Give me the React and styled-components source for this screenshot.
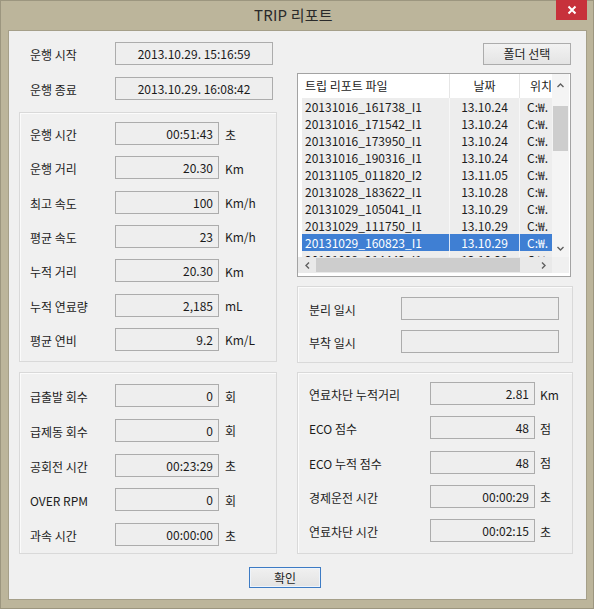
import styled, { createGlobalStyle } from "styled-components";

const GlobalStyle = createGlobalStyle`
  html, body {
    margin: 0;
    padding: 0;
  }
  body {
    width: 594px;
    height: 609px;
    overflow: hidden;
    font-family: "Noto Sans CJK KR", "Noto Sans", sans-serif;
    font-size: 12px;
    color: #1e1e1e;
    background: #bcb59b;
  }
`;

const startEnd = [
  { label: "운행 시작", value: "2013.10.29. 15:16:59" },
  { label: "운행 종료", value: "2013.10.29. 16:08:42" },
];

const driveStats = [
  { label: "운행 시간", value: "00:51:43", unit: "초" },
  { label: "운행 거리", value: "20.30", unit: "Km" },
  { label: "최고 속도", value: "100", unit: "Km/h" },
  { label: "평균 속도", value: "23", unit: "Km/h" },
  { label: "누적 거리", value: "20.30", unit: "Km" },
  { label: "누적 연료량", value: "2,185", unit: "mL" },
  { label: "평균 연비", value: "9.2", unit: "Km/L" },
];

const habitStats = [
  { label: "급출발 회수", value: "0", unit: "회" },
  { label: "급제동 회수", value: "0", unit: "회" },
  { label: "공회전 시간", value: "00:23:29", unit: "초" },
  { label: "OVER RPM", value: "0", unit: "회" },
  { label: "과속 시간", value: "00:00:00", unit: "초" },
];

const ecoStats = [
  { label: "연료차단 누적거리", value: "2.81", unit: "Km" },
  { label: "ECO 점수", value: "48", unit: "점" },
  { label: "ECO 누적 점수", value: "48", unit: "점" },
  { label: "경제운전 시간", value: "00:00:29", unit: "초" },
  { label: "연료차단 시간", value: "00:02:15", unit: "초" },
];

const files = [
  ["20131016_161738_I1", "13.10.24"],
  ["20131016_171542_I1", "13.10.24"],
  ["20131016_173950_I1", "13.10.24"],
  ["20131016_190316_I1", "13.10.24"],
  ["20131105_011820_I2", "13.11.05"],
  ["20131028_183622_I1", "13.10.28"],
  ["20131029_105041_I1", "13.10.29"],
  ["20131029_111750_I1", "13.10.29"],
  ["20131029_160823_I1", "13.10.29"],
  ["20131029_214443_I1", "13.10.29"],
];
const SELECTED = 8;

const Window = styled.div`
  width: 594px;
  height: 609px;
  box-sizing: border-box;
  display: flex;
  flex-direction: column;
  background: #bcb59b;
  box-shadow: inset 0 0 0 1px #9c967f;
`;

const TitleBar = styled.div`
  height: 30px;
  flex-shrink: 0;
  display: grid;
  grid-template-columns: 1fr auto 1fr;
  align-items: center;
  padding-right: 7px;
`;

const Title = styled.div`
  grid-column: 2;
  font-size: 15px;
  line-height: 30px;
  color: #2a2a2a;
  letter-spacing: 0.2px;
`;

const CloseButton = styled.div`
  grid-column: 3;
  justify-self: end;
  align-self: start;
  width: 31px;
  height: 20px;
  background: #c7313b;
  display: flex;
  align-items: center;
  justify-content: center;
`;

const Client = styled.div`
  flex: 1;
  margin: 0 7px 9px 8px;
  box-sizing: border-box;
  background: #f0f0f0;
  border: 1px solid #a59f89;
  display: flex;
  flex-direction: column;
`;

const Body = styled.div`
  display: grid;
  grid-template-columns: 258px 276px;
  column-gap: 20px;
  padding-left: 10px;
`;

const Column = styled.div`
  display: flex;
  flex-direction: column;
  padding-top: ${({ $top }) => $top}px;
`;

const Group = styled.div`
  box-sizing: border-box;
  height: ${({ $h }) => $h}px;
  margin-top: ${({ $mt }) => $mt}px;
  border: 1px solid #d9d9d9;
  box-shadow: inset 1px 1px 0 #fbfbfb;
  padding: ${({ $pt }) => $pt}px 0 0 ${({ $pl }) => $pl}px;
  display: flex;
  flex-direction: column;
  gap: ${({ $gap }) => $gap}px;
`;

const Row = styled.div`
  display: flex;
  align-items: center;
  height: 23px;
  margin-top: ${({ $mt }) => $mt || 0}px;
  padding-left: ${({ $pl }) => $pl || 0}px;
`;

const Label = styled.div`
  width: ${({ $w }) => $w}px;
  flex-shrink: 0;
  line-height: 23px;
  padding-top: 2px;
  white-space: nowrap;
  color: #1c1c1c;
`;

const Field = styled.div`
  box-sizing: border-box;
  width: ${({ $w }) => $w}px;
  height: ${({ $h }) => $h || 23}px;
  border: 1px solid #acacac;
  background: #eeeeee;
  padding: 0 5px;
  line-height: 21px;
  text-align: ${({ $align }) => $align || "right"};
  color: #1a1a1a;
  white-space: nowrap;
`;

const Unit = styled.div`
  margin-left: ${({ $ml }) => $ml}px;
  line-height: 23px;
  padding-top: 1px;
  color: #1c1c1c;
`;

const FolderButton = styled.div`
  align-self: flex-end;
  margin-right: 2px;
  width: 88px;
  height: 22px;
  box-sizing: border-box;
  border: 1px solid #acacac;
  background: linear-gradient(#f2f2f2, #e4e4e4);
  text-align: center;
  line-height: 20px;
`;

const ListBox = styled.div`
  margin-top: 8px;
  width: 274px;
  height: 204px;
  box-sizing: border-box;
  border: 1px solid #a3a3a3;
  background: #fff;
  padding: 0 1px 3px 0;
  display: grid;
  grid-template-columns: 1fr 17px;
  grid-template-rows: 1fr 16px;
`;

const Viewport = styled.div`
  overflow: hidden;
`;

const Header = styled.div`
  height: 24px;
  display: grid;
  grid-template-columns: 151px 70px 1fr;
  background: #fff;
`;

const HeadCell = styled.div`
  line-height: 24px;
  white-space: nowrap;
  overflow: hidden;
  text-align: ${({ $align }) => $align || "left"};
  padding-left: ${({ $pl }) => $pl || 0}px;
  border-left: ${({ $line }) => ($line ? "1px solid #e6e6e6" : "none")};
  color: #1c1c1c;
`;

const FileRow = styled.div`
  margin-left: 4px;
  height: 17px;
  display: grid;
  grid-template-columns: 147px 70px 1fr;
  background: ${({ $sel }) => ($sel ? "#3f7fd3" : "#ededed")};
  color: ${({ $sel }) => ($sel ? "#fff" : "#1c1c1c")};
`;

const Cell = styled.div`
  line-height: 17px;
  white-space: nowrap;
  overflow: hidden;
  text-align: ${({ $align }) => $align || "left"};
  padding-left: ${({ $pl }) => $pl || 0}px;
  border-left: ${({ $line, $sel }) =>
    $line ? `1px solid ${$sel ? "#dbe7f7" : "#f7f7f7"}` : "none"};
`;

const VScroll = styled.div`
  grid-row: 1;
  grid-column: 2;
  background: #f4f4f4;
  display: flex;
  flex-direction: column;
`;

const HScroll = styled.div`
  grid-row: 2;
  grid-column: 1;
  background: #e9e9e9;
  display: flex;
`;

const Corner = styled.div`
  grid-row: 2;
  grid-column: 2;
  background: #f0f0f0;
`;

const ArrowButton = styled.div`
  width: ${({ $w }) => $w}px;
  height: ${({ $h }) => $h}px;
  flex-shrink: 0;
  display: flex;
  align-items: center;
  justify-content: center;
`;

const VTrack = styled.div`
  flex: 1;
  padding: 10px 1px 0 1px;
`;

const Thumb = styled.div`
  background: #cdcdcd;
  width: ${({ $w }) => ($w ? `${$w}px` : "auto")};
  height: ${({ $h }) => ($h ? `${$h}px` : "auto")};
`;

const HTrack = styled.div`
  flex: 1;
  display: flex;
  padding: 1px 0;
`;

const Footer = styled.div`
  padding: 13px 0 0 240px;
`;

const OkButton = styled.div`
  width: 72px;
  height: 21px;
  box-sizing: border-box;
  border: 1px solid #3d7bc4;
  background: linear-gradient(#f0f0f0, #e3e3e3);
  box-shadow: inset 0 0 0 1px #eef4fb;
  text-align: center;
  line-height: 19px;
`;

const chevrons = {
  up: "1.5,6 4.5,3 7.5,6",
  down: "1.5,3 4.5,6 7.5,3",
  left: "6,1.5 3,4.5 6,7.5",
  right: "3,1.5 6,4.5 3,7.5",
};

function Chevron({ dir }) {
  return (
    <svg width="9" height="9" viewBox="0 0 9 9">
      <polyline
        points={chevrons[dir]}
        fill="none"
        stroke="#5f5f5f"
        strokeWidth="1.4"
      />
    </svg>
  );
}

function StatRow({ item, labelW, fieldW, unitMl }) {
  return (
    <Row>
      <Label $w={labelW}>{item.label}</Label>
      <Field $w={fieldW}>{item.value}</Field>
      <Unit $ml={unitMl}>{item.unit}</Unit>
    </Row>
  );
}

export default function App() {
  return (
    <>
      <GlobalStyle />
      <Window>
        <TitleBar>
          <Title>TRIP 리포트</Title>
          <CloseButton>
            <svg width="10" height="10" viewBox="0 0 10 10">
              <path d="M1.5 1.5 L8.5 8.5 M8.5 1.5 L1.5 8.5" stroke="#fff" strokeWidth="2" />
            </svg>
          </CloseButton>
        </TitleBar>
        <Client>
          <Body>
            <Column $top={11}>
              {startEnd.map((item, i) => (
                <Row key={item.label} $pl={11} $mt={i ? 12 : 0}>
                  <Label $w={85}>{item.label}</Label>
                  <Field $w={158} $align="center">
                    {item.value}
                  </Field>
                </Row>
              ))}
              <Group $h={250} $mt={12} $pt={9} $pl={10} $gap={11.33}>
                {driveStats.map((item) => (
                  <StatRow key={item.label} item={item} labelW={85} fieldW={104} unitMl={6} />
                ))}
              </Group>
              <Group $h={182} $mt={10} $pt={11} $pl={10} $gap={11.75}>
                {habitStats.map((item) => (
                  <StatRow key={item.label} item={item} labelW={85} fieldW={104} unitMl={6} />
                ))}
              </Group>
            </Column>
            <Column $top={12}>
              <FolderButton>폴더 선택</FolderButton>
              <ListBox>
                <Viewport>
                  <Header>
                    <HeadCell $pl={7}>트립 리포트 파일</HeadCell>
                    <HeadCell $line $align="center">
                      날짜
                    </HeadCell>
                    <HeadCell $line $pl={10}>
                      위치
                    </HeadCell>
                  </Header>
                  {files.map(([name, date], i) => {
                    const sel = i === SELECTED;
                    return (
                      <FileRow key={name} $sel={sel}>
                        <Cell $pl={3}>{name}</Cell>
                        <Cell $line $sel={sel} $align="center">
                          {date}
                        </Cell>
                        <Cell $line $sel={sel} $pl={7}>
                          C:₩.
                        </Cell>
                      </FileRow>
                    );
                  })}
                </Viewport>
                <VScroll>
                  <ArrowButton $w={17} $h={22}>
                    <Chevron dir="up" />
                  </ArrowButton>
                  <VTrack>
                    <Thumb $h={45} />
                  </VTrack>
                  <ArrowButton $w={17} $h={17}>
                    <Chevron dir="down" />
                  </ArrowButton>
                </VScroll>
                <HScroll>
                  <ArrowButton $w={18} $h={16}>
                    <Chevron dir="left" />
                  </ArrowButton>
                  <HTrack>
                    <Thumb $w={204} />
                  </HTrack>
                  <ArrowButton $w={17} $h={16}>
                    <Chevron dir="right" />
                  </ArrowButton>
                </HScroll>
                <Corner />
              </ListBox>
              <Group $h={77} $mt={9} $pt={10} $pl={11} $gap={10}>
                <Row>
                  <Label $w={92}>분리 일시</Label>
                  <Field $w={158} />
                </Row>
                <Row>
                  <Label $w={92}>부착 일시</Label>
                  <Field $w={158} />
                </Row>
              </Group>
              <Group $h={182} $mt={9} $pt={9} $pl={11} $gap={11.25}>
                {ecoStats.map((item) => (
                  <StatRow key={item.label} item={item} labelW={121} fieldW={105} unitMl={5} />
                ))}
              </Group>
            </Column>
          </Body>
          <Footer>
            <OkButton>확인</OkButton>
          </Footer>
        </Client>
      </Window>
    </>
  );
}
